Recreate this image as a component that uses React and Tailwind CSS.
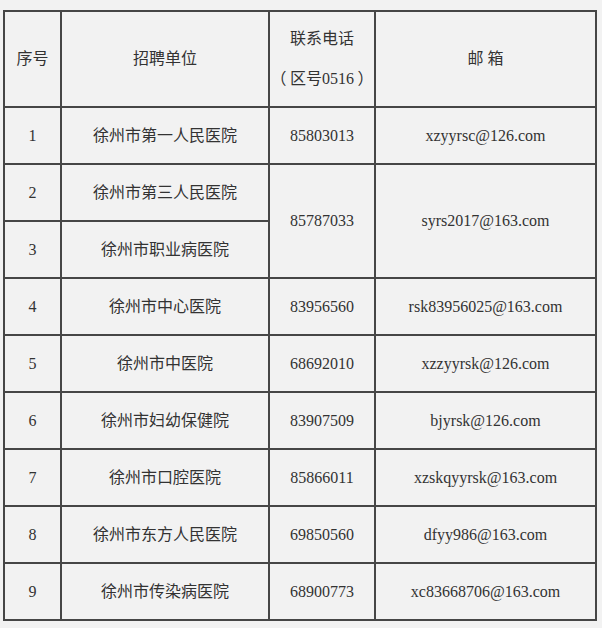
import React from "react";

const rows = [
  ["1", "徐州市第一人民医院", "85803013", "xzyyrsc@126.com"],
  ["2", "徐州市第三人民医院", "85787033", "syrs2017@163.com"],
  ["3", "徐州市职业病医院", null, null],
  ["4", "徐州市中心医院", "83956560", "rsk83956025@163.com"],
  ["5", "徐州市中医院", "68692010", "xzzyyrsk@126.com"],
  ["6", "徐州市妇幼保健院", "83907509", "bjyrsk@126.com"],
  ["7", "徐州市口腔医院", "85866011", "xzskqyyrsk@163.com"],
  ["8", "徐州市东方人民医院", "69850560", "dfyy986@163.com"],
  ["9", "徐州市传染病医院", "68900773", "xc83668706@163.com"],
];

const cell = "bg-[#f2f2f2] flex items-center justify-center text-center";
const cjk = { fontFamily: '"Noto Sans CJK SC", sans-serif' };
const serif = { fontFamily: '"Liberation Serif", serif' };

export default function App() {
  return (
    <div
      className="min-h-[628px] w-[602px] bg-[#f2f2f2] pt-[10px] pl-[3px] text-[16px] text-[#333]"
      style={{ fontFamily: '"Liberation Serif", "Noto Sans CJK SC", serif' }}
    >
      <div className="grid w-[594px] grid-cols-[55px_206px_104px_219px] grid-rows-[94px_repeat(9,55px)] gap-[2px] bg-[#464646] p-[2px]">
        <div className={cell}>序号</div>
        <div className={cell}>招聘单位</div>
        <div className={`${cell} flex-col leading-[38px]`}>
          <span>联系电话</span>
          <span className="whitespace-nowrap">
            <span style={cjk}>（&nbsp;</span>
            <span style={cjk}>区号</span>
            <span style={serif}>0516</span>
            <span style={cjk}>&nbsp;）</span>
          </span>
        </div>
        <div className={cell}>邮&nbsp;箱</div>
        {rows.map(([n, name, phone, mail]) => (
          <React.Fragment key={n}>
            <div className={cell}>{n}</div>
            <div className={cell}>{name}</div>
            {phone !== null && (
              <div className={`${cell} ${n === "2" ? "row-span-2" : ""}`}>{phone}</div>
            )}
            {mail !== null && (
              <div className={`${cell} ${n === "2" ? "row-span-2" : ""}`}>{mail}</div>
            )}
          </React.Fragment>
        ))}
      </div>
    </div>
  );
}
